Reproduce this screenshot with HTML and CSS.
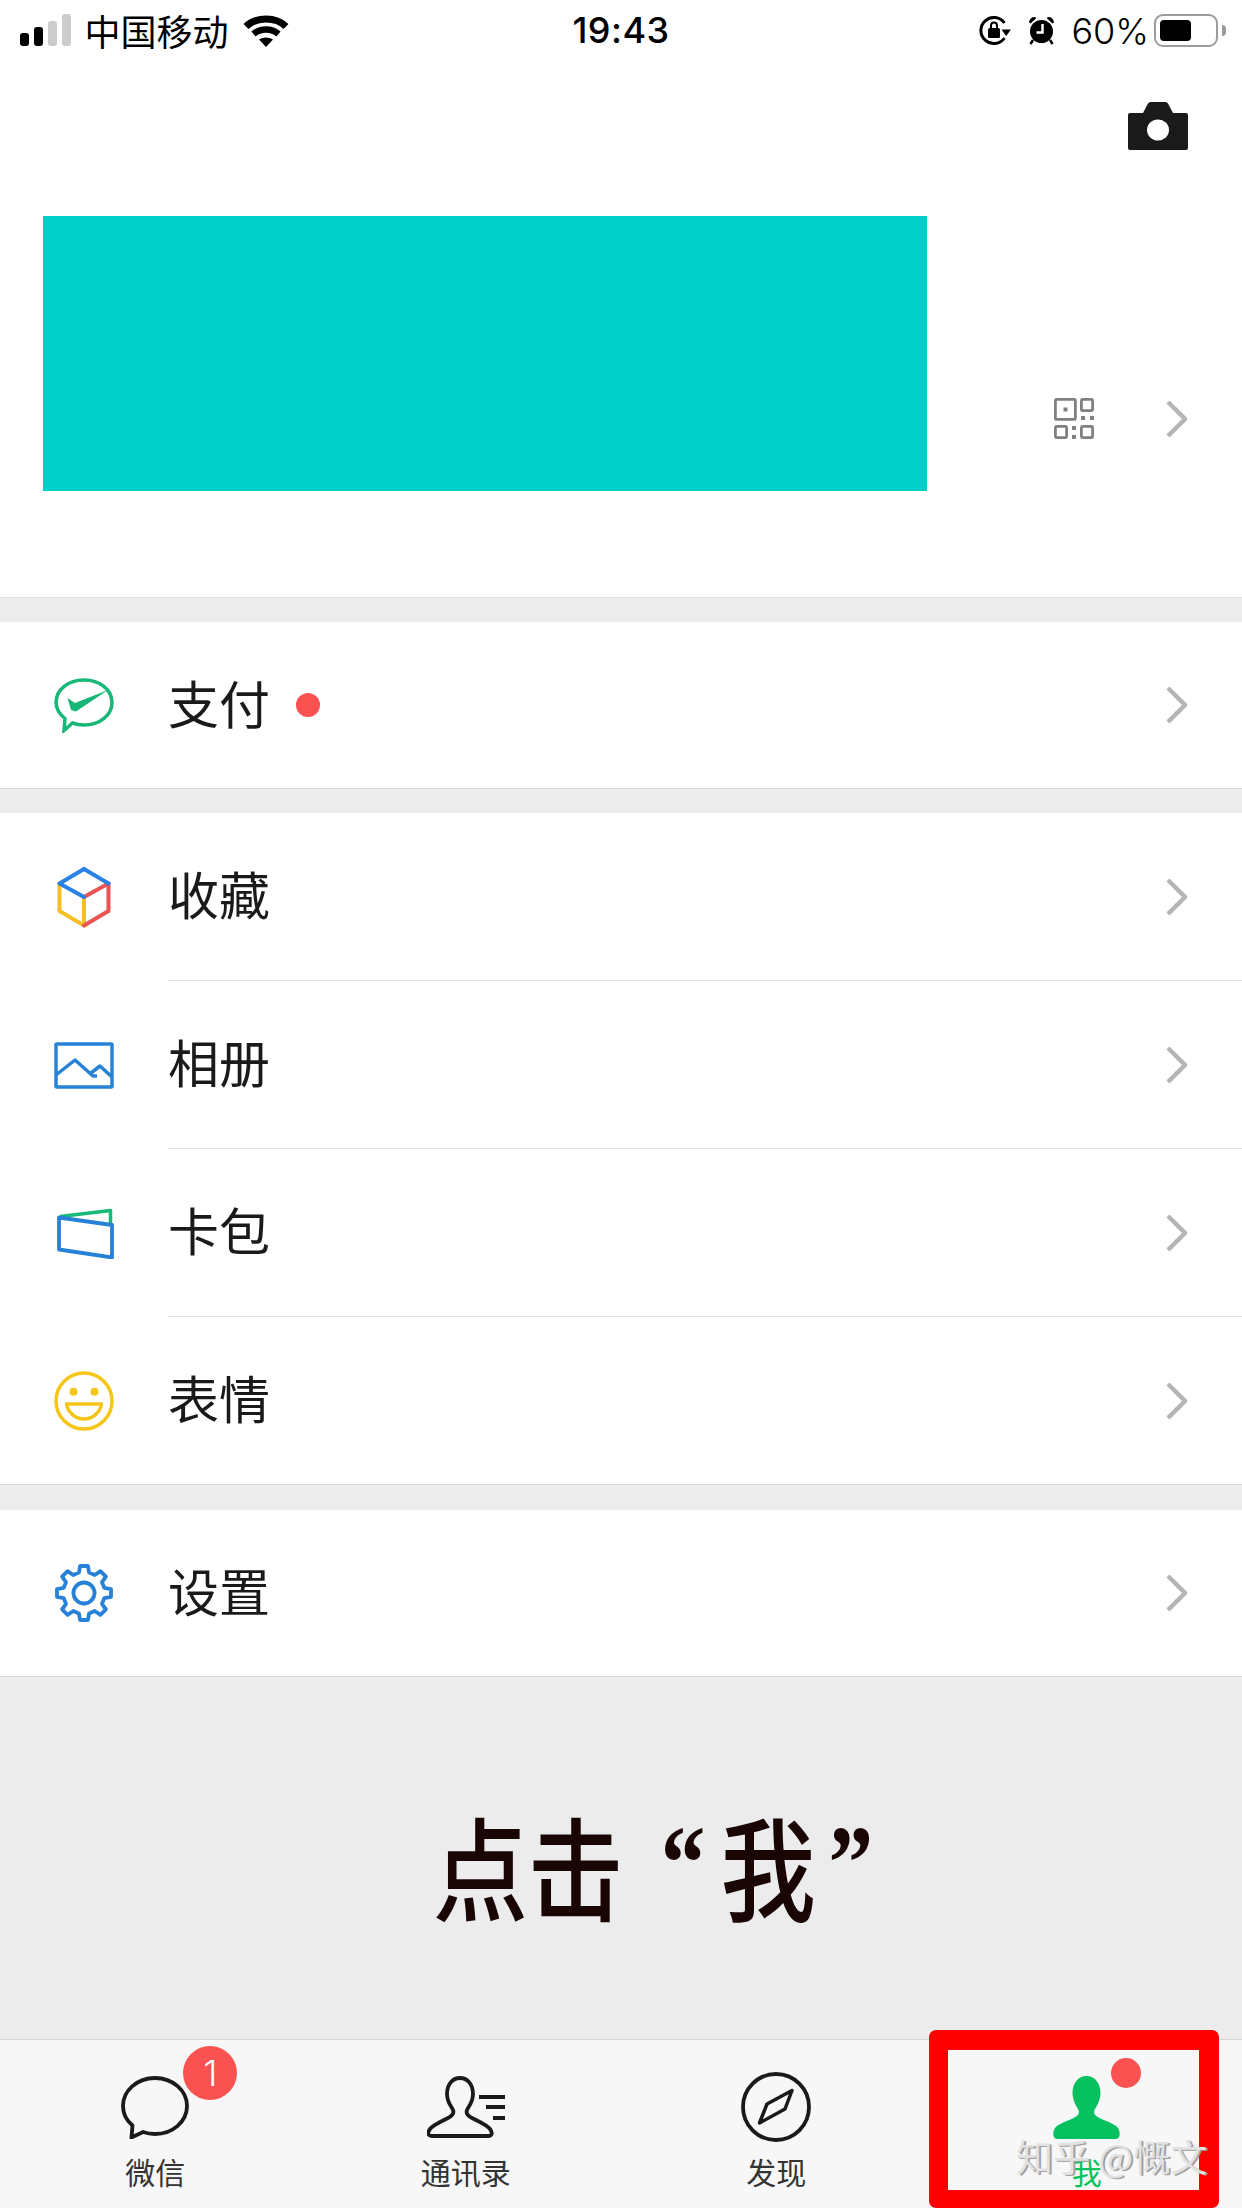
FILE: index.html
```html
<!DOCTYPE html>
<html lang="zh-CN">
<head>
    <meta charset="UTF-8">
    <meta name="viewport" content="width=device-width, initial-scale=1.0">
    <title>我</title>
    <link rel="stylesheet" href="styles.css">
</head>
<body>
    <div class="page">
        <div class="status">
            <div class="status-left">
                <div class="signal">
                    <span class="bar bar-1"></span>
                    <span class="bar bar-2"></span>
                    <span class="bar bar-3"></span>
                    <span class="bar bar-4"></span>
                </div>
                <span class="carrier">中国移动</span>
                <svg class="wifi" width="46" height="33" viewBox="0 0 46 33">
                    <path d="M3 12.5C8 7.5 15 5 23 5S38 7.5 43 12.5" fill="none" stroke="#000" stroke-width="7"/>
                    <path d="M10.5 20C14 17 18 15.5 23 15.5S32 17 35.5 20" fill="none" stroke="#000" stroke-width="6.5"/>
                    <path d="M16 25.5C20 22.8 26 22.8 30 25.5L23 33Z" fill="#000"/>
                </svg>
            </div>
            <div class="time">19:43</div>
            <div class="status-right">
                <svg class="lock" width="32" height="29" viewBox="0 0 32 29">
                    <path d="M25.5 7A13 13 0 1 0 25.5 22" fill="none" stroke="#000" stroke-width="3"/>
                    <path d="M22.5 13.5H32L27.2 20Z" fill="#000"/>
                    <rect x="9" y="12" width="12" height="10" rx="1.5" fill="#000"/>
                    <path d="M12 13V9.5A3 3 0 0 1 18 9.5V13" fill="none" stroke="#000" stroke-width="2"/>
                </svg>
                <svg class="alarm" width="27" height="29" viewBox="0 0 27 29">
                    <path d="M1 6.5C1.5 2.5 4 .5 7.5 1L8 2.5 2.5 7.5Z M26 6.5C25.5 2.5 23 .5 19.5 1L19 2.5 24.5 7.5Z" fill="#000"/>
                    <path d="M5 24L2.5 28M22 24L24.5 28" stroke="#000" stroke-width="2.5"/>
                    <circle cx="13.5" cy="15.5" r="11.5" fill="#000"/>
                    <path d="M14.5 8V16.5H8.5" fill="none" stroke="#fff" stroke-width="2.5"/>
                </svg>
                <span class="percent">60%</span>
                <div class="battery"><span class="battery-fill"></span></div>
            </div>
        </div>

        <div class="profile">
            <div class="camera-row">
                <svg width="60" height="48" viewBox="0 0 60 48">
                    <path d="M2 11H15L20 1.5Q20.8 0 22.5 0H37.5Q39.2 0 40 1.5L45 11H58Q60 11 60 13V46Q60 48 58 48H2Q0 48 0 46V13Q0 11 2 11Z" fill="#1a1a1a"/>
                    <ellipse cx="30" cy="28" rx="11" ry="10.5" fill="#fff"/>
                </svg>
            </div>
            <div class="profile-main">
                <div class="avatar-block"></div>
                <div class="profile-side">
                    <svg class="qr" width="40" height="41" viewBox="0 0 40 41">
                        <g fill="none" stroke="#808080" stroke-width="2.8">
                            <rect x="1.4" y="1.4" width="20" height="20" rx="1.5"/>
                            <rect x="27.4" y="1.4" width="11.2" height="11.2" rx="1.5"/>
                            <rect x="1.4" y="28.4" width="11.2" height="11.2" rx="1.5"/>
                            <rect x="27.4" y="28.4" width="11.2" height="11.2" rx="1.5"/>
                        </g>
                        <g fill="#808080">
                            <rect x="9.5" y="9.5" width="4" height="4"/>
                            <rect x="27" y="18" width="4" height="4"/>
                            <rect x="36" y="18" width="4" height="4"/>
                            <rect x="18" y="28" width="4" height="4"/>
                            <rect x="18" y="37" width="4" height="4"/>
                        </g>
                    </svg>
                    <svg class="chevron" width="21" height="38" viewBox="0 0 21 38">
                        <path d="M2 2L19 19L2 36" fill="none" stroke="#b5b5b5" stroke-width="4.5"/>
                    </svg>
                </div>
            </div>
        </div>

        <div class="group">
            <div class="row">
                <svg class="row-icon" width="60" height="55" viewBox="0 0 60 55">
                    <path d="M30 2C45.5 2 58 11.5 58 24.5C58 37.5 45.5 47 30 47C26 47 22 46.3 18.5 45L10 52.5L11 40.5C5.5 36 2 30.5 2 24.5C2 11.5 14.5 2 30 2Z" fill="none" stroke="#16b777" stroke-width="3.5"/>
                    <path d="M13.5 20L21 25L54 12L22 33.5L17 32Z" fill="#16b777"/>
                </svg>
                <div class="row-body">
                    <span class="row-label">支付</span>
                    <span class="row-dot"></span>
                    <svg class="chevron" width="21" height="38" viewBox="0 0 21 38"><path d="M2 2L19 19L2 36" fill="none" stroke="#b5b5b5" stroke-width="4.5"/></svg>
                </div>
            </div>
        </div>

        <div class="group">
            <div class="row">
                <svg class="row-icon" width="60" height="61" viewBox="-3 0 60 61">
                    <g fill="none" stroke-width="4" stroke-linejoin="round" stroke-linecap="round">
                        <path d="M2.5 16.5V44L27 58.5V30" stroke="#f6bf26"/>
                        <path d="M51.5 16.5V44L27 58.5" stroke="#ea5455"/>
                        <path d="M27 30L51.5 16.5" stroke="#ea5455"/>
                        <path d="M27 2L2.5 16.5L27 30" stroke="#2a82e4"/>
                        <path d="M27 2L51.5 16.5" stroke="#2a82e4"/>
                    </g>
                </svg>
                <div class="row-body line">
                    <span class="row-label">收藏</span>
                    <svg class="chevron" width="21" height="38" viewBox="0 0 21 38"><path d="M2 2L19 19L2 36" fill="none" stroke="#b5b5b5" stroke-width="4.5"/></svg>
                </div>
            </div>
            <div class="row">
                <svg class="row-icon" width="60" height="47" viewBox="0 0 60 47">
                    <g fill="none" stroke="#2782d7" stroke-width="3.5" stroke-linejoin="round">
                        <rect x="2" y="2" width="56" height="43" rx="1"/>
                        <path d="M2 33L21 18L39 34H43M37 31L46 24L58 35"/>
                    </g>
                </svg>
                <div class="row-body line">
                    <span class="row-label">相册</span>
                    <svg class="chevron" width="21" height="38" viewBox="0 0 21 38"><path d="M2 2L19 19L2 36" fill="none" stroke="#b5b5b5" stroke-width="4.5"/></svg>
                </div>
            </div>
            <div class="row">
                <svg class="row-icon" width="60" height="51" viewBox="-3 0 60 51">
                    <path d="M3 8.5L53.5 2.5V15" fill="none" stroke="#17b978" stroke-width="3.5" stroke-linejoin="round"/>
                    <path d="M2 9.5L55 17V49.5L2 41.5Z" fill="none" stroke="#2782d7" stroke-width="3.8" stroke-linejoin="round"/>
                </svg>
                <div class="row-body line">
                    <span class="row-label">卡包</span>
                    <svg class="chevron" width="21" height="38" viewBox="0 0 21 38"><path d="M2 2L19 19L2 36" fill="none" stroke="#b5b5b5" stroke-width="4.5"/></svg>
                </div>
            </div>
            <div class="row">
                <svg class="row-icon" width="60" height="60" viewBox="0 0 60 60">
                    <circle cx="30" cy="30" r="28" fill="none" stroke="#f5c518" stroke-width="3.5"/>
                    <circle cx="19.5" cy="20.7" r="4" fill="#f5c518"/>
                    <circle cx="40.5" cy="20.7" r="4" fill="#f5c518"/>
                    <path d="M12.5 33H47.5C46 42 38 48 30 48C22 48 14 42 12.5 33Z" fill="none" stroke="#f5c518" stroke-width="3.5" stroke-linejoin="round"/>
                </svg>
                <div class="row-body row-end">
                    <span class="row-label">表情</span>
                    <svg class="chevron" width="21" height="38" viewBox="0 0 21 38"><path d="M2 2L19 19L2 36" fill="none" stroke="#b5b5b5" stroke-width="4.5"/></svg>
                </div>
            </div>
        </div>

        <div class="group group-last">
            <div class="row">
                <svg class="row-icon" width="60" height="60" viewBox="0 0 60 60">
                    <g transform="translate(30 30)" fill="none" stroke="#2782d7" stroke-width="3.8" stroke-linejoin="round">
                        <polygon points="-3.9,-27 3.9,-27 5.1,-20.4 10.8,-18 16.4,-21.9 21.9,-16.4 18,-10.8 20.4,-5.1 27,-3.9 27,3.9 20.4,5.1 18,10.8 21.9,16.4 16.4,21.9 10.8,18 5.1,20.4 3.9,27 -3.9,27 -5.1,20.4 -10.8,18 -16.4,21.9 -21.9,16.4 -18,10.8 -20.4,5.1 -27,3.9 -27,-3.9 -20.4,-5.1 -18,-10.8 -21.9,-16.4 -16.4,-21.9 -10.8,-18 -5.1,-20.4"/>
                        <circle r="10.5"/>
                    </g>
                </svg>
                <div class="row-body">
                    <span class="row-label">设置</span>
                    <svg class="chevron" width="21" height="38" viewBox="0 0 21 38"><path d="M2 2L19 19L2 36" fill="none" stroke="#b5b5b5" stroke-width="4.5"/></svg>
                </div>
            </div>
        </div>

        <div class="notice">
            <div class="notice-text">点击<span class="quote quote-open">“</span>我<span class="quote quote-close">”</span></div>
        </div>

        <div class="tabbar">
            <div class="tab">
                <div class="tab-icon">
                    <svg width="70" height="63" viewBox="0 0 70 63">
                        <path d="M35 2C52.7 2 67 14.5 67 30C67 45.5 52.7 58 35 58C31 58 27 57.4 23 56L11.5 61.5L12.5 49.5C6.5 44.5 3 37.5 3 30C3 14.5 17.3 2 35 2Z" fill="none" stroke="#1a1a1a" stroke-width="3.8"/>
                    </svg>
                    <span class="badge">1</span>
                </div>
                <span class="tab-label">微信</span>
            </div>
            <div class="tab">
                <div class="tab-icon">
                    <svg width="78" height="63" viewBox="0 0 78 63">
                        <path d="M33 2C41 2 46 9 46 18C46 26 42 30 40 34C38.5 38 41 40 45 42C53 46 60 49 63 53C66 57 65 60 61 60H5C1 60 0 57 3 53C6 49 13 46 21 42C25 40 27.5 38 26 34C24 30 20 26 20 18C20 9 25 2 33 2Z" fill="none" stroke="#1a1a1a" stroke-width="3.8"/>
                        <path d="M52 21H78M59 31H78M66 42H78" stroke="#1a1a1a" stroke-width="4"/>
                    </svg>
                </div>
                <span class="tab-label">通讯录</span>
            </div>
            <div class="tab">
                <div class="tab-icon">
                    <svg width="70" height="70" viewBox="0 0 70 70">
                        <circle cx="35" cy="35" r="33" fill="none" stroke="#1a1a1a" stroke-width="3.8"/>
                        <path d="M51 18.5L44 37L18.5 51L26 32Z" fill="none" stroke="#1a1a1a" stroke-width="3.5" stroke-linejoin="round"/>
                    </svg>
                </div>
                <span class="tab-label">发现</span>
            </div>
            <div class="tab tab-active">
                <div class="tab-icon">
                    <svg width="67" height="63" viewBox="0 0 67 63">
                        <path d="M33.5 0C42 0 47.5 7.5 47.5 17C47.5 25 43.5 30 41.5 34C40 38 42.5 40 46.5 42C55 46 62 48 65 52C67.5 55.5 67.5 63 63 63H4C-.5 63 -.5 55.5 2 52C5 48 12 46 20.5 42C24.5 40 27 38 25.5 34C23.5 30 19.5 25 19.5 17C19.5 7.5 25 0 33.5 0Z" fill="#07c160"/>
                    </svg>
                    <span class="badge-dot"></span>
                </div>
                <span class="tab-label">我</span>
            </div>
            <div class="red-frame"></div>
            <div class="watermark">知乎 @慨文</div>
        </div>
    </div>
</body>
</html>
```

FILE: styles.css
```css
* {
    box-sizing: border-box;
    margin: 0;
    padding: 0;
}
body {
    font-family: "Noto Sans CJK SC", "Noto Sans", sans-serif;
    color: #1a1a1a;
    background: #ececec;
}
svg {
    display: block;
    flex-shrink: 0;
}
.page {
    width: 1242px;
    height: 2208px;
    display: flex;
    flex-direction: column;
    overflow: hidden;
}

/* status bar */
.status {
    height: 66px;
    padding: 0 16px 6px 20px;
    display: grid;
    grid-template-columns: 1fr auto 1fr;
    align-items: center;
    background: #fff;
    color: #000;
}
.status-left, .status-right {
    display: flex;
    align-items: center;
}
.status-right {
    justify-content: flex-end;
}
.signal {
    display: flex;
    align-items: flex-end;
    gap: 5.5px;
    height: 32px;
}
.bar {
    width: 8.5px;
    border-radius: 3px;
    background: #000;
}
.bar-1 { height: 13px; }
.bar-2 { height: 19px; }
.bar-3 { height: 25px; background: #ccc; }
.bar-4 { height: 32px; background: #ccc; }
.carrier {
    margin-left: 14px;
    font-size: 36px;
    line-height: 40px;
}
.wifi {
    margin-left: 14px;
}
.time {
    margin-right: 4px;
    font-family: Inter, sans-serif;
    font-size: 36px;
    font-weight: 500;
    letter-spacing: .5px;
}
.lock {
    margin-right: 17px;
}
.alarm {
    margin-right: 16px;
}
.percent {
    margin-right: 5px;
    padding-top: 2px;
    font-family: Inter, sans-serif;
    font-size: 36px;
    font-weight: 300;
}
.battery {
    position: relative;
    width: 64px;
    height: 33px;
    margin-right: 8px;
    padding: 4px;
    border: 2.5px solid #9c9c9c;
    border-radius: 9px;
}
.battery::after {
    content: "";
    position: absolute;
    right: -10px;
    top: 9px;
    width: 4px;
    height: 11px;
    border-radius: 0 4px 4px 0;
    background: #9c9c9c;
}
.battery-fill {
    display: block;
    width: 31px;
    height: 100%;
    border-radius: 4px;
    background: #000;
}

/* profile */
.profile {
    height: 532px;
    background: #fff;
    border-bottom: 1px solid #dcdcdc;
}
.camera-row {
    display: flex;
    justify-content: flex-end;
    padding: 36px 54px 0 0;
    height: 150px;
}
.profile-main {
    display: flex;
    align-items: flex-end;
    padding-left: 43px;
}
.avatar-block {
    width: 884px;
    height: 275px;
    background: #00cfc8;
}
.profile-side {
    display: flex;
    align-items: center;
    margin-left: 127px;
    padding-bottom: 52px;
}
.qr {
    margin-right: 72px;
}

/* menu groups */
.group {
    margin-top: 24px;
    background: #fff;
    border-bottom: 1px solid #dcdcdc;
}
.group-last {
    margin-top: 25px;
}
.row {
    display: flex;
    align-items: center;
    padding-left: 54px;
}
.row-icon {
    margin-right: 54px;
}
.row-body {
    flex: 1;
    height: 166px;
    display: flex;
    align-items: center;
    padding-right: 55px;
}
.row-body.line {
    height: 168px;
    border-bottom: 1px solid #e4e4e4;
}
.row-body.row-end {
    height: 167px;
}
.row-label {
    margin-bottom: 7px;
    font-size: 51px;
    line-height: 60px;
}
.row-dot {
    width: 24px;
    height: 24px;
    margin-left: 26px;
    border-radius: 50%;
    background: #fa5151;
}
.row-body .chevron {
    margin-left: auto;
}

/* big caption, stretched tall like the pasted text in the shot */
.notice {
    flex: 1;
    display: flex;
    align-items: center;
    justify-content: center;
    padding: 12px 0 0 64px;
    background: #ececec;
}
.notice-text {
    display: flex;
    align-items: center;
    font-size: 112px;
    font-weight: 500;
    color: #1a0505;
    white-space: nowrap;
    transform: scaleX(.85);
}
.quote {
    font-family: "Liberation Serif", serif;
    font-size: 105px;
    line-height: 112px;
    font-weight: 700;
}
.quote-open {
    margin: 0 18px 0 44px;
}
.quote-close {
    margin-left: 15px;
}

/* tab bar */
.tabbar {
    position: relative;
    height: 169px;
    display: grid;
    grid-template-columns: repeat(4, 1fr);
    background: #f7f7f7;
    border-top: 1px solid #d4d4d4;
}
.tab {
    display: flex;
    flex-direction: column;
    align-items: center;
    padding-top: 32px;
}
.tab-icon {
    position: relative;
    height: 70px;
    display: flex;
    align-items: center;
}
.tab-label {
    margin-top: 11px;
    font-size: 30px;
    line-height: 36px;
    color: #333;
}
.tab-active .tab-label {
    color: #07c160;
}
.badge {
    position: absolute;
    left: 63px;
    top: -26px;
    width: 54px;
    height: 54px;
    border-radius: 50%;
    background: #fa5151;
    color: #fff;
    font-family: Inter, sans-serif;
    font-size: 36px;
    font-weight: 300;
    line-height: 54px;
    text-align: center;
}
.badge-dot {
    position: absolute;
    left: 58px;
    top: -14px;
    width: 30px;
    height: 30px;
    border-radius: 50%;
    background: #fa5151;
}
.red-frame {
    position: absolute;
    left: 929px;
    top: -10px;
    width: 290px;
    height: 178px;
    border: solid #fe0000;
    border-width: 20px 20px 18px 19px;
    border-radius: 7px;
}
.watermark {
    position: absolute;
    left: 1016px;
    top: 92px;
    font-size: 37px;
    line-height: 48px;
    white-space: nowrap;
    color: #e2e2e2;
    text-shadow: 2px 1px 0 #a0a0a0;
}
```
